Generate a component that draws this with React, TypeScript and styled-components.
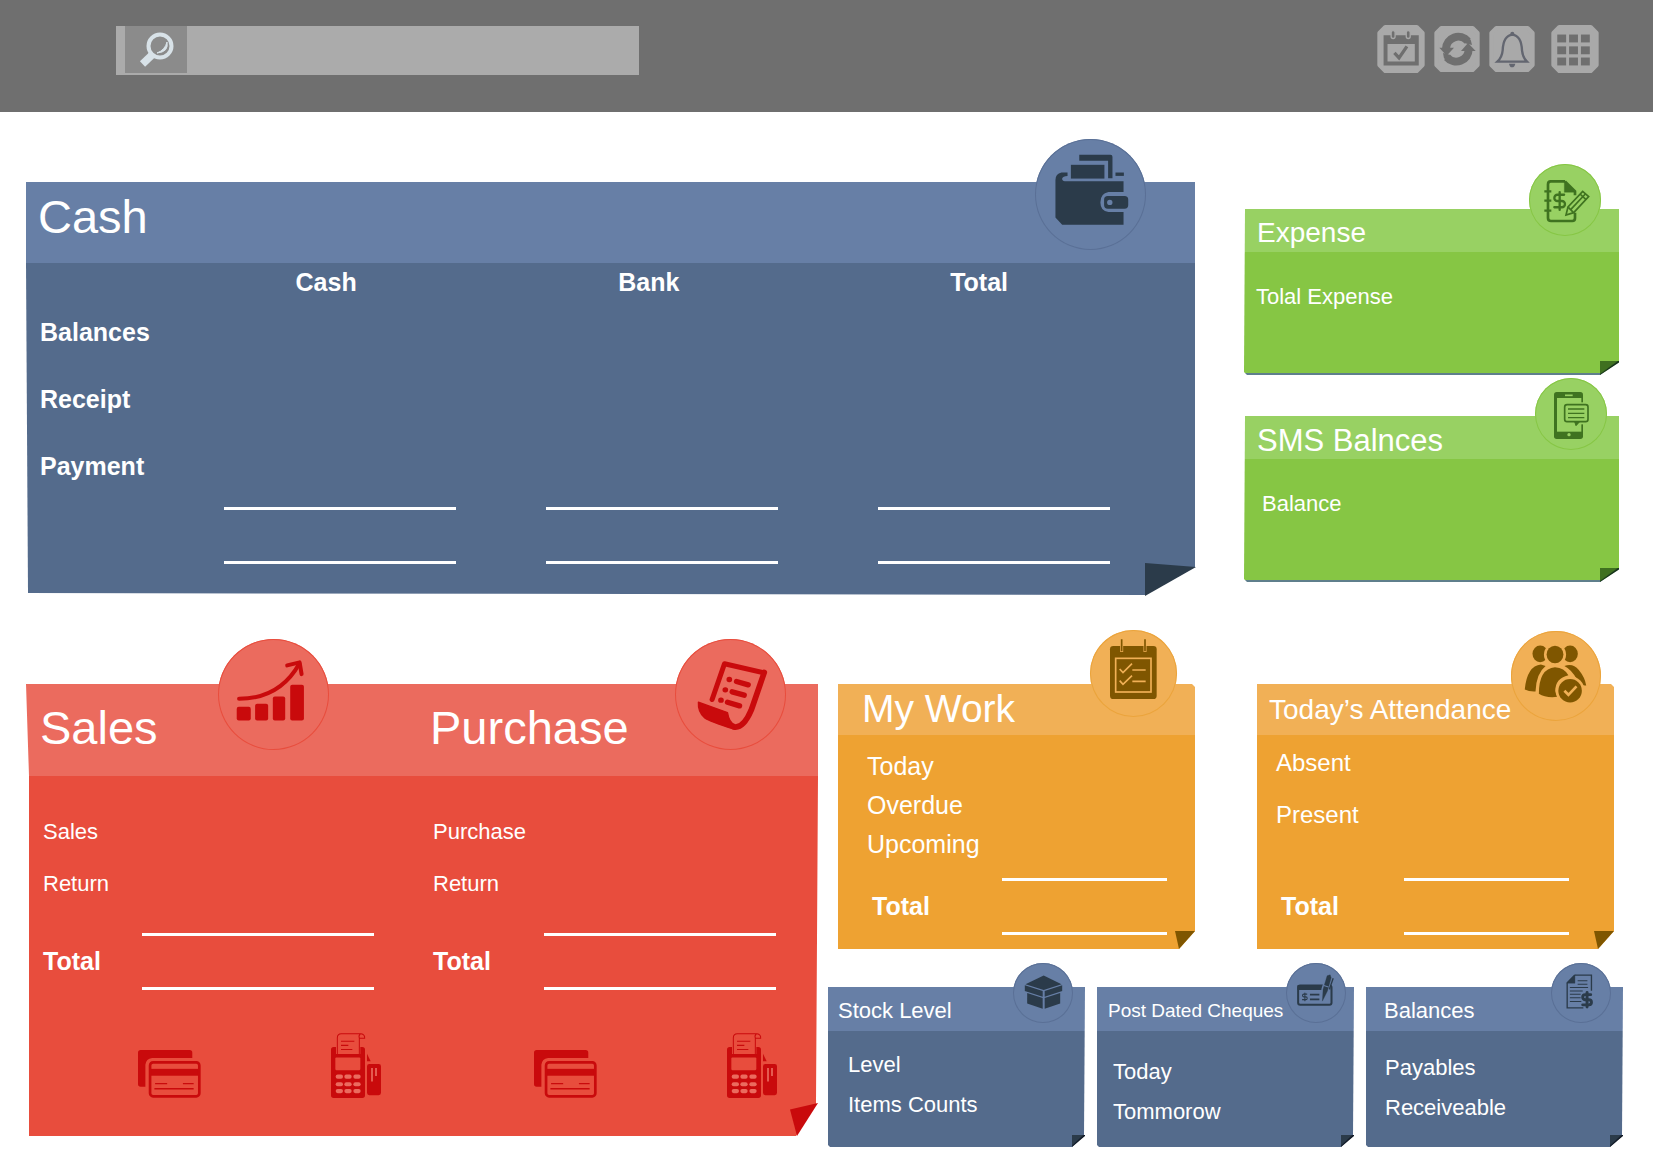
import React from 'react';
import styled, { createGlobalStyle, css } from 'styled-components';
import { DollarSign } from 'lucide-react';

const tones = {
  blue: { head: '#677fa6', body: '#546b8c', ink: '#2b3b4a', ring: '#5a7096' },
  green: { head: '#98d163', body: '#86c644', ink: '#3f7320', ring: '#86c644' },
  red: { head: '#eb6b5e', body: '#e84d3d', ink: '#c90a0c', ring: '#e84d3d' },
  orange: { head: '#f1b056', body: '#eea232', ink: '#7f5600', ring: '#eba43c' },
};
type Tone = keyof typeof tones;

const GlobalStyle = createGlobalStyle`
  * { box-sizing: border-box; }
  body {
    margin: 0;
    background: #fff;
    color: #fff;
    font-family: 'Liberation Sans', Arial, sans-serif;
  }
  h2, dl, dd { margin: 0; font-weight: 400; }
  button {
    border: 0;
    padding: 0;
    background: none;
    cursor: pointer;
    display: block;
  }
  svg { display: block; }
`;

/* ---------- top bar ---------- */

const TopBar = styled.header`
  display: flex;
  align-items: flex-start;
  justify-content: space-between;
  height: 112px;
  padding: 25px 54px 0 116px;
  background: #6f6f6f;
`;

const SearchForm = styled.form`
  display: flex;
  align-items: flex-start;
  flex: 0 1 523px;
  height: 49px;
  margin-top: 1px;
  padding-left: 9px;
  background: #ababab;
`;

const SearchButton = styled.button`
  display: grid;
  place-items: center;
  width: 62px;
  height: 47px;
  background: #8b8b8b;
`;

const SearchInput = styled.input`
  flex: 1;
  min-width: 0;
  height: 49px;
  padding: 0 12px;
  border: 0;
  outline: 0;
  background: transparent;
  color: #fff;
  font: 22px 'Liberation Sans', Arial, sans-serif;
`;

const Actions = styled.nav`
  display: flex;
  align-items: center;
  gap: 9px;
`;

const ActionButton = styled.button<{ $size: number; $apart?: boolean }>`
  width: ${(p) => p.$size}px;
  height: ${(p) => p.$size}px;
  margin-left: ${(p) => (p.$apart ? 7 : 0)}px;
`;

/* ---------- page grid ---------- */

const Main = styled.main`
  display: flex;
  flex-direction: column;
  gap: 89px;
  padding: 70px 30px 22px 26px;
`;

const TopRow = styled.section`
  display: grid;
  grid-template-columns: 1169fr 375fr;
  align-items: start;
  gap: 49px;
  padding-right: 4px;
`;

const SideStack = styled.div`
  display: grid;
  gap: 41px;
  padding-top: 27px;
`;

const BottomRow = styled.section`
  display: grid;
  grid-template-columns: 792fr 795fr;
  align-items: start;
  gap: 10px;
`;

const BottomRight = styled.div`
  display: grid;
  gap: 38px;
`;

const WorkRow = styled.div`
  display: grid;
  grid-template-columns: 1fr 1fr;
  gap: 62px;
  padding: 0 9px 0 10px;
`;

const SmallRow = styled.div`
  display: grid;
  grid-template-columns: repeat(3, 1fr);
  gap: 12px;
`;

/* ---------- paper card ---------- */

const Paper = styled.article<{ $tone: Tone; $head: number; $clip: string; $edge?: string }>`
  position: relative;
  isolation: isolate;
  &::before {
    content: '';
    position: absolute;
    inset: 0;
    z-index: -1;
    clip-path: polygon(${(p) => p.$clip});
    background: linear-gradient(
      ${(p) => css`
        ${tones[p.$tone].head} 0 ${p.$head}px,
        ${tones[p.$tone].body} ${p.$head}px calc(100% - ${p.$edge ? 2 : 0}px),
        ${p.$edge ?? tones[p.$tone].body} 0
      `}
    );
  }
`;

const Fold = styled.span<{ $w: number; $h: number; $shape: string; $color: string; $out?: number }>`
  position: absolute;
  right: ${(p) => -(p.$out ?? 0)}px;
  bottom: ${(p) => -(p.$out ?? 0)}px;
  width: ${(p) => p.$w}px;
  height: ${(p) => p.$h}px;
  background: ${(p) => p.$color};
  clip-path: polygon(${(p) => p.$shape});
`;

const Head = styled.div<{ $height: number; $pad: number; $drop?: number; $lift?: number }>`
  display: flex;
  align-items: center;
  height: ${(p) => p.$height}px;
  padding: ${(p) => p.$drop ?? 0}px 0 ${(p) => p.$lift ?? 0}px ${(p) => p.$pad}px;
`;

const Title = styled.h2<{ $size: number }>`
  position: relative;
  z-index: 1;
  font-size: ${(p) => p.$size}px;
  line-height: ${(p) => p.$size + 6}px;
  white-space: nowrap;
`;

const Badge = styled.span<{ $tone: Tone; $size: number; $top: number; $right: number }>`
  position: absolute;
  top: ${(p) => p.$top}px;
  right: ${(p) => p.$right}px;
  width: ${(p) => p.$size}px;
  height: ${(p) => p.$size}px;
  border-radius: 50%;
  background: ${(p) => tones[p.$tone].head};
  color: ${(p) => tones[p.$tone].ink};
  box-shadow: inset 0 0 0 1px ${(p) => tones[p.$tone].ring};
  > svg { width: 100%; height: 100%; }
`;

const List = styled.dl<{ $top: number; $bottom: number; $inset: number }>`
  padding: ${(p) => p.$top}px 0 ${(p) => p.$bottom}px ${(p) => p.$inset}px;
`;

const Row = styled.div<{ $height: number; $size: number }>`
  display: flex;
  align-items: center;
  height: ${(p) => p.$height}px;
  font-size: ${(p) => p.$size}px;
  white-space: nowrap;
`;

const TotalRow = styled.div<{ $gap: number; $right: number; $indent?: number }>`
  display: flex;
  align-items: center;
  justify-content: space-between;
  margin-top: ${(p) => p.$gap}px;
  padding: 0 ${(p) => p.$right}px 0 ${(p) => p.$indent ?? 0}px;
  font-size: 25px;
  font-weight: 700;
`;

const Sum = styled.dd<{ $width: number }>`
  width: ${(p) => p.$width}px;
  height: 57px;
  border: solid #fff;
  border-width: 3px 0;
`;

/* ---------- cash table ---------- */

const CashTable = styled.table`
  width: 100%;
  table-layout: fixed;
  border-collapse: collapse;
  font-size: 25px;
  th { text-align: left; font-weight: 700; }
  td, th { padding: 0; }
  thead tr { height: 36px; }
  thead th { padding: 3px 0 0 72px; }
  tbody tr { height: 67px; }
  tbody th { padding-left: 14px; }
  tfoot tr { height: 95px; }
  tfoot td { padding-top: 7px; vertical-align: top; }
`;

const TableSum = styled.div`
  width: 232px;
  max-width: 90%;
  height: 57px;
  border: solid #fff;
  border-width: 3px 0;
`;

/* ---------- sales and purchase ---------- */

const Ledger = styled.div`
  display: grid;
  grid-template-columns: 390fr 402fr;
`;

const LedgerColumn = styled.section`
  position: relative;
`;

const PayRow = styled.div`
  display: flex;
  align-items: flex-end;
  justify-content: center;
  gap: 130px;
  padding: 0 0 38px 76px;
`;

/* ---------- icons ---------- */

const SearchIcon = () => (
  <svg width="36" height="36" viewBox="0 0 36 36" fill="none" stroke="#d8e2e8">
    <circle cx="22" cy="14" r="11.500" strokeWidth="4" />
    <path d="M14 23 L4.500 32" strokeWidth="7.500" />
    <path d="M11 21 L15 25" strokeWidth="3" />
    <path d="M29 10 Q31 20 19 21 Q27 18 29 10Z" fill="#d8e2e8" strokeWidth="1" />
  </svg>
);

const CalendarCheckIcon = () => (
  <svg width="100%" height="100%" viewBox="81 72 144 146">
    <path
      d="M105 78H201L219 96V194L201 212H105L87 194V96Z"
      fill="#a9a9a9"
      stroke="#a9a9a9"
      strokeWidth="12"
      strokeLinejoin="round"
    />
    <path fillRule="evenodd" d="M100 103H207V195H100ZM112 130V183H195V130Z" fill="#6f6f6f" />
    {[129, 175].map((x) => (
      <rect key={x} x={x - 6} y="89" width="12" height="24" rx="6" fill="#6f6f6f" stroke="#a9a9a9" strokeWidth="4" />
    ))}
    <path d="M133 157L147 172L171 137" fill="none" stroke="#6f6f6f" strokeWidth="10" />
  </svg>
);

const RefreshTile = () => (
  <svg width="100%" height="100%" viewBox="254 77 138 138">
    <path
      d="M276 83H370L385 98V194L370 209H276L261 194V98Z"
      fill="#a9a9a9"
      stroke="#a9a9a9"
      strokeWidth="12"
      strokeLinejoin="round"
    />
    <g fill="none" stroke="#6f6f6f" strokeWidth="24">
      <path d="M355 122A37 37 0 0 0 290 145" />
      <path d="M293 171A37 37 0 0 0 358 147" />
    </g>
    <g fill="#6f6f6f">
      <path d="M270 142H314L292 166Z" />
      <path d="M335 152H379L356 128Z" />
      <path d="M344 128L368 134L364 118L350 108Z" />
      <path d="M304 164L281 158L284 174L298 184Z" />
    </g>
  </svg>
);

const BellTile = () => (
  <svg width="100%" height="100%" viewBox="417 75 138 138">
    <path
      d="M439 81H533L548 96V192L533 207H439L424 192V96Z"
      fill="#a9a9a9"
      stroke="#a9a9a9"
      strokeWidth="12"
      strokeLinejoin="round"
    />
    <path
      d="M442 182H531Q518 169 516 148Q514 104 487 101Q460 104 458 148Q456 169 442 182Z"
      fill="none"
      stroke="#636670"
      strokeWidth="7"
    />
    <path d="M477 188H496Q494 199 486 199Q479 199 477 188Z" fill="#636670" />
    <circle cx="487" cy="98" r="6" fill="#636670" />
  </svg>
);

const GridTile = () => (
  <svg width="100%" height="100%" viewBox="603 72 144 146">
    <path
      d="M627 78H723L741 96V194L723 212H627L609 194V96Z"
      fill="#a9a9a9"
      stroke="#a9a9a9"
      strokeWidth="12"
      strokeLinejoin="round"
    />
    {[101, 137, 171].map((y) =>
      [621, 657, 693].map((x) => <rect key={`${x}-${y}`} x={x} y={y} width="27" height="24" fill="#6f6f6f" />)
    )}
  </svg>
);

const WalletIcon = () => (
  <svg viewBox="646 58 331 331" fill={tones.blue.ink}>
    <path d="M778 105H871Q877 105 877 111V175H864V123H778Z" />
    <rect x="753" y="135" width="100" height="41" />
    <path d="M743 158H725Q707 162 707 180V292L727 314H910V276H865Q841 272 841 247Q841 220 865 216H910V184H735Q726 183 727 176Q729 168 743 168Z" />
    <rect x="886" y="158" width="25" height="10" />
    <rect x="852" y="228" width="72" height="38" rx="11" />
    <circle cx="869" cy="247" r="8" fill={tones.blue.head} />
  </svg>
);

const GrowthIcon = () => (
  <svg viewBox="625 60 332 332" fill={tones.red.ink}>
    <rect x="681" y="263" width="42" height="41" rx="6" />
    <rect x="736" y="254" width="39" height="50" rx="6" />
    <rect x="789" y="232" width="37" height="72" rx="6" />
    <rect x="841" y="197" width="41" height="107" rx="6" />
    <g fill="none" stroke={tones.red.ink} strokeWidth="12" strokeLinecap="round" strokeLinejoin="round">
      <path d="M688 239Q810 238 868 134" />
      <path d="M832 139L869 130L875 165" />
    </g>
  </svg>
);

const ReceiptIcon = () => (
  <svg viewBox="796 57 332 332" fill="none" stroke={tones.red.ink} strokeLinecap="round" strokeLinejoin="round">
    <path d="M907 238L944 131L1062 158" strokeWidth="15" />
    <path d="M1063 157L1024 270Q1000 326 972 320" strokeWidth="17" />
    <path
      d="M866 246L953 277Q958 308 975 313L970 326Q900 303 885 293Q864 275 866 246Z"
      fill={tones.red.ink}
      strokeWidth="4"
    />
    <g strokeWidth="16">
      <path d="M958 178h1M980 184L1015 194" />
      <path d="M946 209h1M967 215L1003 225" />
      <path d="M933 240h1M953 246L989 257" />
    </g>
  </svg>
);

const CardsIcon = () => (
  <svg width="63" height="48" viewBox="383 1243 188 140" preserveAspectRatio="none">
    <g fill={tones.red.ink}>
      <path d="M391 1243H537Q545 1243 545 1251V1266H425Q407 1268 405 1286V1350H391Q383 1350 383 1342V1251Q383 1243 391 1243Z" />
      <rect x="418" y="1298" width="148" height="20" />
    </g>
    <g fill="none" stroke={tones.red.ink}>
      <rect x="419" y="1279" width="147" height="99" rx="9" strokeWidth="8" />
      <path d="M434 1341H470M517 1341H549" strokeWidth="4" />
      <path d="M432 1356H549" strokeWidth="5" />
    </g>
  </svg>
);

const TerminalIcon = () => (
  <svg width="50" height="65" viewBox="960 1199 150 189" preserveAspectRatio="none">
    <g fill={tones.red.ink}>
      <path d="M968 1240H975V1260H1048V1240H1054Q1062 1240 1062 1248V1380Q1062 1388 1054 1388H968Q960 1388 960 1380V1248Q960 1240 968 1240Z" />
      <rect x="1068" y="1289" width="42" height="91" rx="7" />
      <path d="M1068 1259L1079 1281H1068Z" />
    </g>
    <rect x="973" y="1270" width="75" height="37" rx="3" fill={tones.red.body} />
    {[1320, 1342, 1362].map((y) =>
      [974, 1000, 1027].map((x) => (
        <rect key={`${x}-${y}`} x={x} y={y} width="22" height="12" rx="6" fill={tones.red.head} />
      ))
    )}
    <path d="M1083 1301V1340M1095 1301V1324" stroke={tones.red.head} strokeWidth="5" />
    <g fill="none" stroke={tones.red.ink} strokeWidth="3">
      <path d="M979 1260V1213Q979 1201 991 1201H1050Q1062 1203 1061 1214H1045Q1042 1206 1048 1202M1045 1214V1260" />
      <path d="M990 1223H1030M990 1235H1012M990 1247H1024" />
    </g>
  </svg>
);

const NotebookIcon = () => (
  <svg viewBox="897 42 216 216" fill="none" stroke={tones.green.ink}>
    <path d="M1005 94H962Q954 94 954 103V204Q954 213 963 213H1027Q1035 213 1035 204V188M1005 94L1035 124V136" strokeWidth="8" />
    <path d="M1003 93L1037 127H1003Z" fill={tones.green.ink} />
    <path d="M943 124H964M943 152H964M943 182H964" strokeWidth="7" />
    <DollarSign x={957} y={120} width={64} height={66} strokeWidth={2.6} />
    <path d="M1008 195L1014 171L1058 124L1076 140L1031 188Z" fill={tones.green.head} strokeWidth="5" />
    <path d="M1022 179L1066 132M1015 172L1030 187M1050 132L1068 149" strokeWidth="5" />
  </svg>
);

const PhoneIcon = () => (
  <svg viewBox="915 24 216 216" fill="none" stroke={tones.green.ink}>
    <rect x="972" y="66" width="87" height="141" rx="8" fill={tones.green.ink} stroke="none" />
    <rect x="981" y="84" width="73" height="101" fill={tones.green.head} stroke="none" />
    <rect x="998" y="97" width="82" height="66" fill={tones.green.head} stroke="none" />
    <rect x="1004" y="104" width="70" height="51" rx="7" strokeWidth="5" />
    <path d="M1034 155L1038 167L1049 155" fill={tones.green.ink} strokeWidth="3" />
    <path d="M1014 117H1063M1014 130H1063M1014 143H1063" strokeWidth="4" />
    <path d="M1005 76H1028" stroke={tones.green.head} strokeWidth="5" />
    <circle cx="1017" cy="194" r="5" fill={tones.green.head} stroke="none" />
  </svg>
);

const PlannerIcon = () => (
  <svg viewBox="810 30 261 261" fill="none" stroke={tones.orange.head}>
    <rect x="870" y="78" width="140" height="159" rx="10" fill={tones.orange.ink} stroke="none" />
    <path d="M905 72V96M975 72V96" strokeWidth="9" />
    <path d="M905 58V94M975 58V94" stroke={tones.orange.ink} strokeWidth="5" />
    <rect x="887" y="115" width="106" height="101" strokeWidth="5" />
    <path d="M899 147L909 158L936 131M899 182L909 193L936 167M937 150H977M937 184H977" strokeWidth="5" />
  </svg>
);

const TeamIcon = () => (
  <svg viewBox="814 34 268 268" fill={tones.orange.ink}>
    <ellipse cx="901" cy="102" rx="23" ry="25" />
    <ellipse cx="990" cy="102" rx="23" ry="25" />
    <circle cx="945" cy="104" r="33" fill={tones.orange.head} />
    <ellipse cx="945" cy="104" rx="25" ry="26" />
    <path d="M855 208Q862 138 903 134L917 138Q889 160 887 214Q868 215 855 208Z" />
    <path d="M973 138Q998 128 1016 150Q1034 172 1038 196Q1016 198 1010 178Q996 150 973 138Z" />
    <path d="M897 221Q897 146 945 142Q973 144 985 166Q945 176 946 213Q948 224 953 230Q917 234 897 221Z" />
    <circle cx="990" cy="212" r="43" fill={tones.orange.head} />
    <circle cx="990" cy="212" r="35" />
    <path d="M973 212L985 224L1009 199" fill="none" stroke={tones.orange.head} strokeWidth="8" />
  </svg>
);

const BoxIcon = () => (
  <svg viewBox="580 42 178 178" fill={tones.blue.ink}>
    <path d="M671 79L724 105L671 122L617 105Z" />
    <path d="M615 108L668 125V142L615 125Z" />
    <path d="M726 108L674 125V142L726 125Z" />
    <path d="M622 131L668 146V178L622 162Z" />
    <path d="M720 131L674 146V178L720 162Z" />
  </svg>
);

const ChequeIcon = () => (
  <svg viewBox="169 37 178 178" fill="none" stroke={tones.blue.ink}>
    <rect x="205" y="104" width="99" height="57" rx="6" strokeWidth="6" />
    <path d="M203 110H300" strokeWidth="14" />
    <DollarSign x={211} y={122} width={28} height={31} strokeWidth={2.6} />
    <path d="M240 131H268M240 145H268" strokeWidth="5" />
    <path
      d="M291 75L300 72L303 81L292 120L277 150L279 115Z"
      fill={tones.blue.ink}
      stroke={tones.blue.head}
      strokeWidth="10"
    />
    <path d="M291 75L300 72L303 81L292 120L277 150L279 115Z" fill={tones.blue.ink} strokeWidth="1" />
    <path d="M309 82L298 114" strokeWidth="4" />
    <path d="M281 104L295 108" stroke={tones.blue.head} strokeWidth="3" />
  </svg>
);

const InvoiceIcon = () => (
  <svg viewBox="964 34 178 178" fill="none" stroke={tones.blue.ink}>
    <path d="M1034 70H1084V116M1034 70L1012 93V167H1060" strokeWidth="4" />
    <path d="M1035 69V94H1011Z" fill={tones.blue.ink} />
    <path d="M1043 87H1072M1043 97H1072M1020 107H1074M1020 117H1058M1020 127H1052M1020 137H1052M1020 148H1054" strokeWidth="3" />
    <DollarSign x={1045} y={113} width={52} height={60} strokeWidth={4} />
  </svg>
);

/* ---------- cards ---------- */

const CashCard = () => (
  <Paper
    $tone="blue"
    $head={81}
    $clip="0 0, 100% 0, 100% calc(100% - 28px), calc(100% - 50px) 100%, 2px calc(100% - 2px), 0 81px"
  >
    <Head $height={81} $pad={12} $lift={12}>
      <Title $size={47}>Cash</Title>
    </Head>
    <CashTable>
      <colgroup>
        <col style={{ width: '16.9%' }} />
        <col style={{ width: '27.6%' }} />
        <col style={{ width: '28.4%' }} />
        <col />
      </colgroup>
      <thead>
        <tr>
          <td />
          {['Cash', 'Bank', 'Total'].map((name) => (
            <th key={name} scope="col">{name}</th>
          ))}
        </tr>
      </thead>
      <tbody>
        {['Balances', 'Receipt', 'Payment'].map((name) => (
          <tr key={name}>
            <th scope="row">{name}</th>
            <td />
            <td />
            <td />
          </tr>
        ))}
      </tbody>
      <tfoot>
        <tr>
          <td />
          <td><TableSum /></td>
          <td><TableSum /></td>
          <td><TableSum /></td>
        </tr>
      </tfoot>
    </CashTable>
    <Badge $tone="blue" $size={111} $top={-43} $right={49}><WalletIcon /></Badge>
    <Fold $w={51} $h={33} $shape="0 0, 100% 12%, 0 100%" $color={tones.blue.ink} $out={1} />
  </Paper>
);

type GreenProps = {
  title: string;
  size: number;
  label: string;
  inset: number;
  badgeRight: number;
  badgeTop: number;
  icon: React.ReactNode;
};

const GreenCard = ({ title, size, label, inset, badgeRight, badgeTop, icon }: GreenProps) => (
  <Paper
    $tone="green"
    $head={43}
    $edge="#5f7f8c"
    $clip="1px 0, 100% 0, 100% calc(100% - 13px), calc(100% - 19px) 100%, 3px 100%, 0 calc(100% - 3px)"
  >
    <Head $height={43} $pad={13} $drop={5}>
      <Title $size={size}>{title}</Title>
    </Head>
    <List $top={28} $bottom={61} $inset={inset}>
      <Row $height={34} $size={22}><dt>{label}</dt></Row>
    </List>
    <Badge $tone="green" $size={72} $top={badgeTop} $right={badgeRight}>{icon}</Badge>
    <Fold
      $w={19}
      $h={14}
      $shape="0 0, 100% 0, 100% 10%, 0 100%"
      $color="linear-gradient(144deg, #3f7020 0 44%, #14301c 50%)"
    />
  </Paper>
);

type LedgerProps = { title: string; labels: string[]; badgeRight: number; icon: React.ReactNode };

const LedgerPart = ({ title, labels, badgeRight, icon }: LedgerProps) => (
  <LedgerColumn>
    <Head $height={92} $pad={14} $lift={6}>
      <Title $size={47}>{title}</Title>
    </Head>
    <List $top={30} $bottom={43} $inset={17}>
      {labels.map((label) => (
        <Row key={label} $height={52} $size={22}><dt>{label}</dt></Row>
      ))}
      <TotalRow $gap={23} $right={42}>
        <dt>Total</dt>
        <Sum $width={232} />
      </TotalRow>
    </List>
    <PayRow>
      <button type="button" aria-label={`${title} by card`}><CardsIcon /></button>
      <button type="button" aria-label={`${title} by terminal`}><TerminalIcon /></button>
    </PayRow>
    <Badge $tone="red" $size={111} $top={-45} $right={badgeRight}>{icon}</Badge>
  </LedgerColumn>
);

type WorkProps = {
  title: string;
  size: number;
  pad: number;
  lift?: number;
  labels: string[];
  labelSize: number;
  rowHeight: number;
  top: number;
  gap: number;
  inset: number;
  right: number;
  badge: { size: number; top: number; right: number };
  icon: React.ReactNode;
};

const WorkCard = (p: WorkProps) => (
  <Paper
    $tone="orange"
    $head={51}
    $clip="0 0, calc(100% - 3px) 0, 100% 3px, 100% calc(100% - 18px), calc(100% - 16px) 100%, 0 100%"
  >
    <Head $height={51} $pad={p.pad} $lift={p.lift}>
      <Title $size={p.size}>{p.title}</Title>
    </Head>
    <List $top={p.top} $bottom={14} $inset={p.inset}>
      {p.labels.map((label) => (
        <Row key={label} $height={p.rowHeight} $size={p.labelSize}><dt>{label}</dt></Row>
      ))}
      <TotalRow $gap={p.gap} $right={p.right} $indent={5}>
        <dt>Total</dt>
        <Sum $width={165} />
      </TotalRow>
    </List>
    <Badge $tone="orange" $size={p.badge.size} $top={p.badge.top} $right={p.badge.right}>{p.icon}</Badge>
    <Fold $w={20} $h={18} $shape="0 0, 100% 0, 20% 100%" $color={tones.orange.ink} />
  </Paper>
);

type SmallProps = {
  title: string;
  size: number;
  pad: number;
  labels: string[];
  top: number;
  inset: number;
  badgeRight: number;
  icon: React.ReactNode;
};

const SmallCard = ({ title, size, pad, labels, top, inset, badgeRight, icon }: SmallProps) => (
  <Paper
    $tone="blue"
    $head={44}
    $clip="0 0, 100% 0, calc(100% - 1px) calc(100% - 11px), calc(100% - 13px) 100%, 2px 100%, 0 calc(100% - 2px)"
  >
    <Head $height={44} $pad={pad} $drop={3}>
      <Title $size={size}>{title}</Title>
    </Head>
    <List $top={top} $bottom={36 - top} $inset={inset}>
      {labels.map((label) => (
        <Row key={label} $height={40} $size={22}><dt>{label}</dt></Row>
      ))}
    </List>
    <Badge $tone="blue" $size={60} $top={-24} $right={badgeRight}>{icon}</Badge>
    <Fold
      $w={13}
      $h={12}
      $shape="0 0, 100% 0, 100% 8%, 0 100%"
      $color="linear-gradient(137deg, #2b3b4a 0 40%, #0c1420 50%)"
    />
  </Paper>
);

export default function App() {
  return (
    <>
      <GlobalStyle />
      <TopBar>
        <SearchForm role="search" onSubmit={(e) => e.preventDefault()}>
          <SearchButton type="submit" aria-label="Search"><SearchIcon /></SearchButton>
          <SearchInput type="text" aria-label="Search text" />
        </SearchForm>
        <Actions aria-label="Shortcuts">
          <ActionButton type="button" $size={48} aria-label="Calendar"><CalendarCheckIcon /></ActionButton>
          <ActionButton type="button" $size={46} aria-label="Refresh"><RefreshTile /></ActionButton>
          <ActionButton type="button" $size={46} aria-label="Notifications"><BellTile /></ActionButton>
          <ActionButton type="button" $size={48} $apart aria-label="Apps"><GridTile /></ActionButton>
        </Actions>
      </TopBar>
      <Main>
        <TopRow>
          <CashCard />
          <SideStack>
            <GreenCard title="Expense" size={28} label="Tolal Expense" inset={12} badgeRight={18} badgeTop={-45} icon={<NotebookIcon />} />
            <GreenCard title="SMS Balnces" size={31} label="Balance" inset={18} badgeRight={12} badgeTop={-38} icon={<PhoneIcon />} />
          </SideStack>
        </TopRow>
        <BottomRow>
          <Paper
            $tone="red"
            $head={92}
            $clip="0 0, 100% 0, 100% 92px, calc(100% - 2px) calc(100% - 32px), calc(100% - 22px) 100%, 3px 100%, 3px 92px"
          >
            <Ledger>
              <LedgerPart title="Sales" labels={['Sales', 'Return']} badgeRight={87} icon={<GrowthIcon />} />
              <LedgerPart title="Purchase" labels={['Purchase', 'Return']} badgeRight={32} icon={<ReceiptIcon />} />
            </Ledger>
            <Fold $w={28} $h={33} $shape="0 20%, 100% 0, 25% 100%" $color={tones.red.ink} />
          </Paper>
          <BottomRight>
            <WorkRow>
              <WorkCard
                title="My Work"
                size={39}
                pad={24}
                lift={3}
                labels={['Today', 'Overdue', 'Upcoming']}
                labelSize={25}
                rowHeight={39}
                top={12}
                gap={14}
                inset={29}
                right={28}
                badge={{ size: 87, top: -54, right: 18 }}
                icon={<PlannerIcon />}
              />
              <WorkCard
                title="Today’s Attendance"
                size={28}
                pad={12}
                labels={['Absent', 'Present']}
                labelSize={24}
                rowHeight={52}
                top={2}
                gap={37}
                inset={19}
                right={45}
                badge={{ size: 90, top: -53, right: 13 }}
                icon={<TeamIcon />}
              />
            </WorkRow>
            <SmallRow>
              <SmallCard title="Stock Level" size={22} pad={10} labels={['Level', 'Items Counts']} top={14} inset={20} badgeRight={12} icon={<BoxIcon />} />
              <SmallCard title="Post Dated Cheques" size={19} pad={11} labels={['Today', 'Tommorow']} top={21} inset={16} badgeRight={8} icon={<ChequeIcon />} />
              <SmallCard title="Balances" size={22} pad={18} labels={['Payables', 'Receiveable']} top={17} inset={19} badgeRight={12} icon={<InvoiceIcon />} />
            </SmallRow>
          </BottomRight>
        </BottomRow>
      </Main>
    </>
  );
}
